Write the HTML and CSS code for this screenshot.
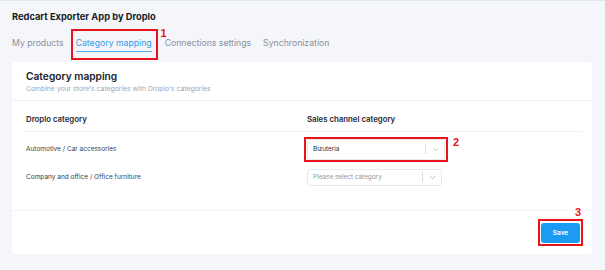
FILE: index.html
```html
<!DOCTYPE html>
<html>
<head>
<meta charset="utf-8">
<link rel="stylesheet" href="styles.css">
</head>
<body>
<div class="app">
  <h1 class="app-title">Redcart Exporter App by Droplo</h1>
  <nav class="tabs">
    <span class="tab">My products</span>
    <span class="tab tab-active">Category mapping<span class="mark mark-tab"></span><span class="num num-1">1</span></span>
    <span class="tab">Connections settings</span>
    <span class="tab">Synchronization</span>
  </nav>
  <section class="card">
    <header class="card-head">
      <h2 class="card-title">Category mapping</h2>
      <p class="card-sub">Combine your store's categories with Droplo's categories</p>
    </header>
    <div class="table">
      <div class="row row-head">
        <div class="cell-a">Droplo category</div>
        <div class="cell-b">Sales channel category</div>
      </div>
      <div class="row">
        <div class="cell-a">Automotive / Car accessories</div>
        <div class="cell-b">
          <div class="select">
            <span class="select-val">Bizuteria</span>
            <span class="select-sep"></span>
            <svg class="chev" width="7" height="5" viewBox="0 0 7 5"><path d="M1 1.2 L3.5 3.6 L6 1.2" fill="none" stroke="#b4bac6" stroke-width="0.9"/></svg>
            <span class="mark mark-select"></span><span class="num num-2">2</span>
          </div>
        </div>
      </div>
      <div class="row">
        <div class="cell-a">Company and office / Office furniture</div>
        <div class="cell-b">
          <div class="select select-sm">
            <span class="select-val placeholder">Please select category</span>
            <span class="select-sep"></span>
            <svg class="chev" width="7" height="5" viewBox="0 0 7 5"><path d="M1 1.2 L3.5 3.6 L6 1.2" fill="none" stroke="#b4bac6" stroke-width="0.9"/></svg>
          </div>
        </div>
      </div>
    </div>
    <footer class="card-foot">
      <button class="btn">Save<span class="mark mark-btn"></span><span class="num num-3">3</span></button>
    </footer>
  </section>
</div>
</body>
</html>
```
FILE: styles.css
```css
* { box-sizing: border-box; }
html, body { margin: 0; padding: 0; }
body {
  background: #f4f6f9;
  border-top: 1px solid #e2e5ea;
  font-family: "Inter", "Open Sans", sans-serif;
  color: #1d1f2c;
  width: 605px;
  height: 270px;
  overflow: hidden;
}
.app { padding: 0 13px 0 12px; }
.app-title {
  margin: 0;
  padding-top: 9px;
  font-size: 9.3px;
  line-height: 13px;
  font-weight: 700;
  color: #181a26;
}
.tabs {
  display: flex;
  gap: 12px;
  margin-top: 14px;
  height: 25px;
}
.tab {
  position: relative;
  font-size: 8.7px;
  line-height: 12px;
  color: #8b909d;
  height: 15px;
}
.tab:nth-child(3) { margin-left: 1px; }
.tab-active {
  color: #2f9bf0;
  border-bottom: 1.5px solid #57aef3;
}
.mark {
  position: absolute;
  border: 2px solid #e8141b;
  pointer-events: none;
}
.mark-tab { left: -5px; right: -6px; top: -8px; bottom: -9px; }
.num {
  position: absolute;
  color: #e8141b;
  font-family: "Liberation Sans", sans-serif;
  font-weight: 700;
  font-size: 11px;
  line-height: 11px;
}
.num-1 { right: -15px; top: -9px; }
.card {
  background: #fff;
  border-radius: 3px;
  height: 192px;
  display: flex;
  flex-direction: column;
}
.card-head {
  padding: 7px 14px 0;
  height: 39px;
  border-bottom: 1px solid #f0f2f5;
}
.card-title {
  margin: 0;
  font-size: 10.2px;
  line-height: 14px;
  font-weight: 600;
  color: #1a1c28;
}
.card-sub {
  margin: 0;
  margin-top: 1px;
  font-size: 6.8px;
  line-height: 9px;
  color: #9ea6b8;
}
.table { padding: 0 9px 0 9px; }
.row {
  display: grid;
  grid-template-columns: 286px 1fr;
  align-items: center;
  height: 28px;
  font-size: 6.5px;
  color: #3a3d4a;
}
.row-head {
  height: 31px;
  padding-top: 5px;
  border-bottom: 1px solid #f1f3f6;
  font-size: 7.8px;
  font-weight: 600;
  color: #25283a;
}
.row-head + .row { margin-top: 3px; }
.cell-a { padding-left: 5px; }
.select {
  position: relative;
  width: 138px;
  height: 21px;
  border: 1px solid #e6e9ee;
  border-radius: 3px;
  display: flex;
  align-items: center;
  padding-left: 5px;
  font-size: 6.4px;
  color: #2b2e3c;
}
.select-sm { width: 135px; height: 17px; }
.select-val { flex: 1; }
.placeholder { color: #8f95a3; }
.select-sep { width: 1px; height: 10px; background: #d8dce3; margin-right: 6px; }
.chev { margin-right: 5px; }
.mark-select { left: -4px; right: -4px; top: -3px; bottom: -3px; }
.num-2 { right: -15px; top: -3px; }
.card-foot {
  margin-top: auto;
  border-top: 1px solid #f0f2f5;
  height: 44px;
  display: flex;
  justify-content: flex-end;
  align-items: flex-start;
  padding: 12px 12px 0 0;
}
.btn {
  position: relative;
  width: 39px;
  height: 20px;
  border: none;
  border-radius: 3px;
  background: #1c9bf2;
  color: #fff;
  font-family: "Inter", sans-serif;
  font-size: 6.5px;
  font-weight: 600;
  padding: 0;
}
.mark-btn { left: -3px; right: -3px; top: -4px; bottom: -3px; }
.num-3 { right: -1px; top: -16px; }
```
